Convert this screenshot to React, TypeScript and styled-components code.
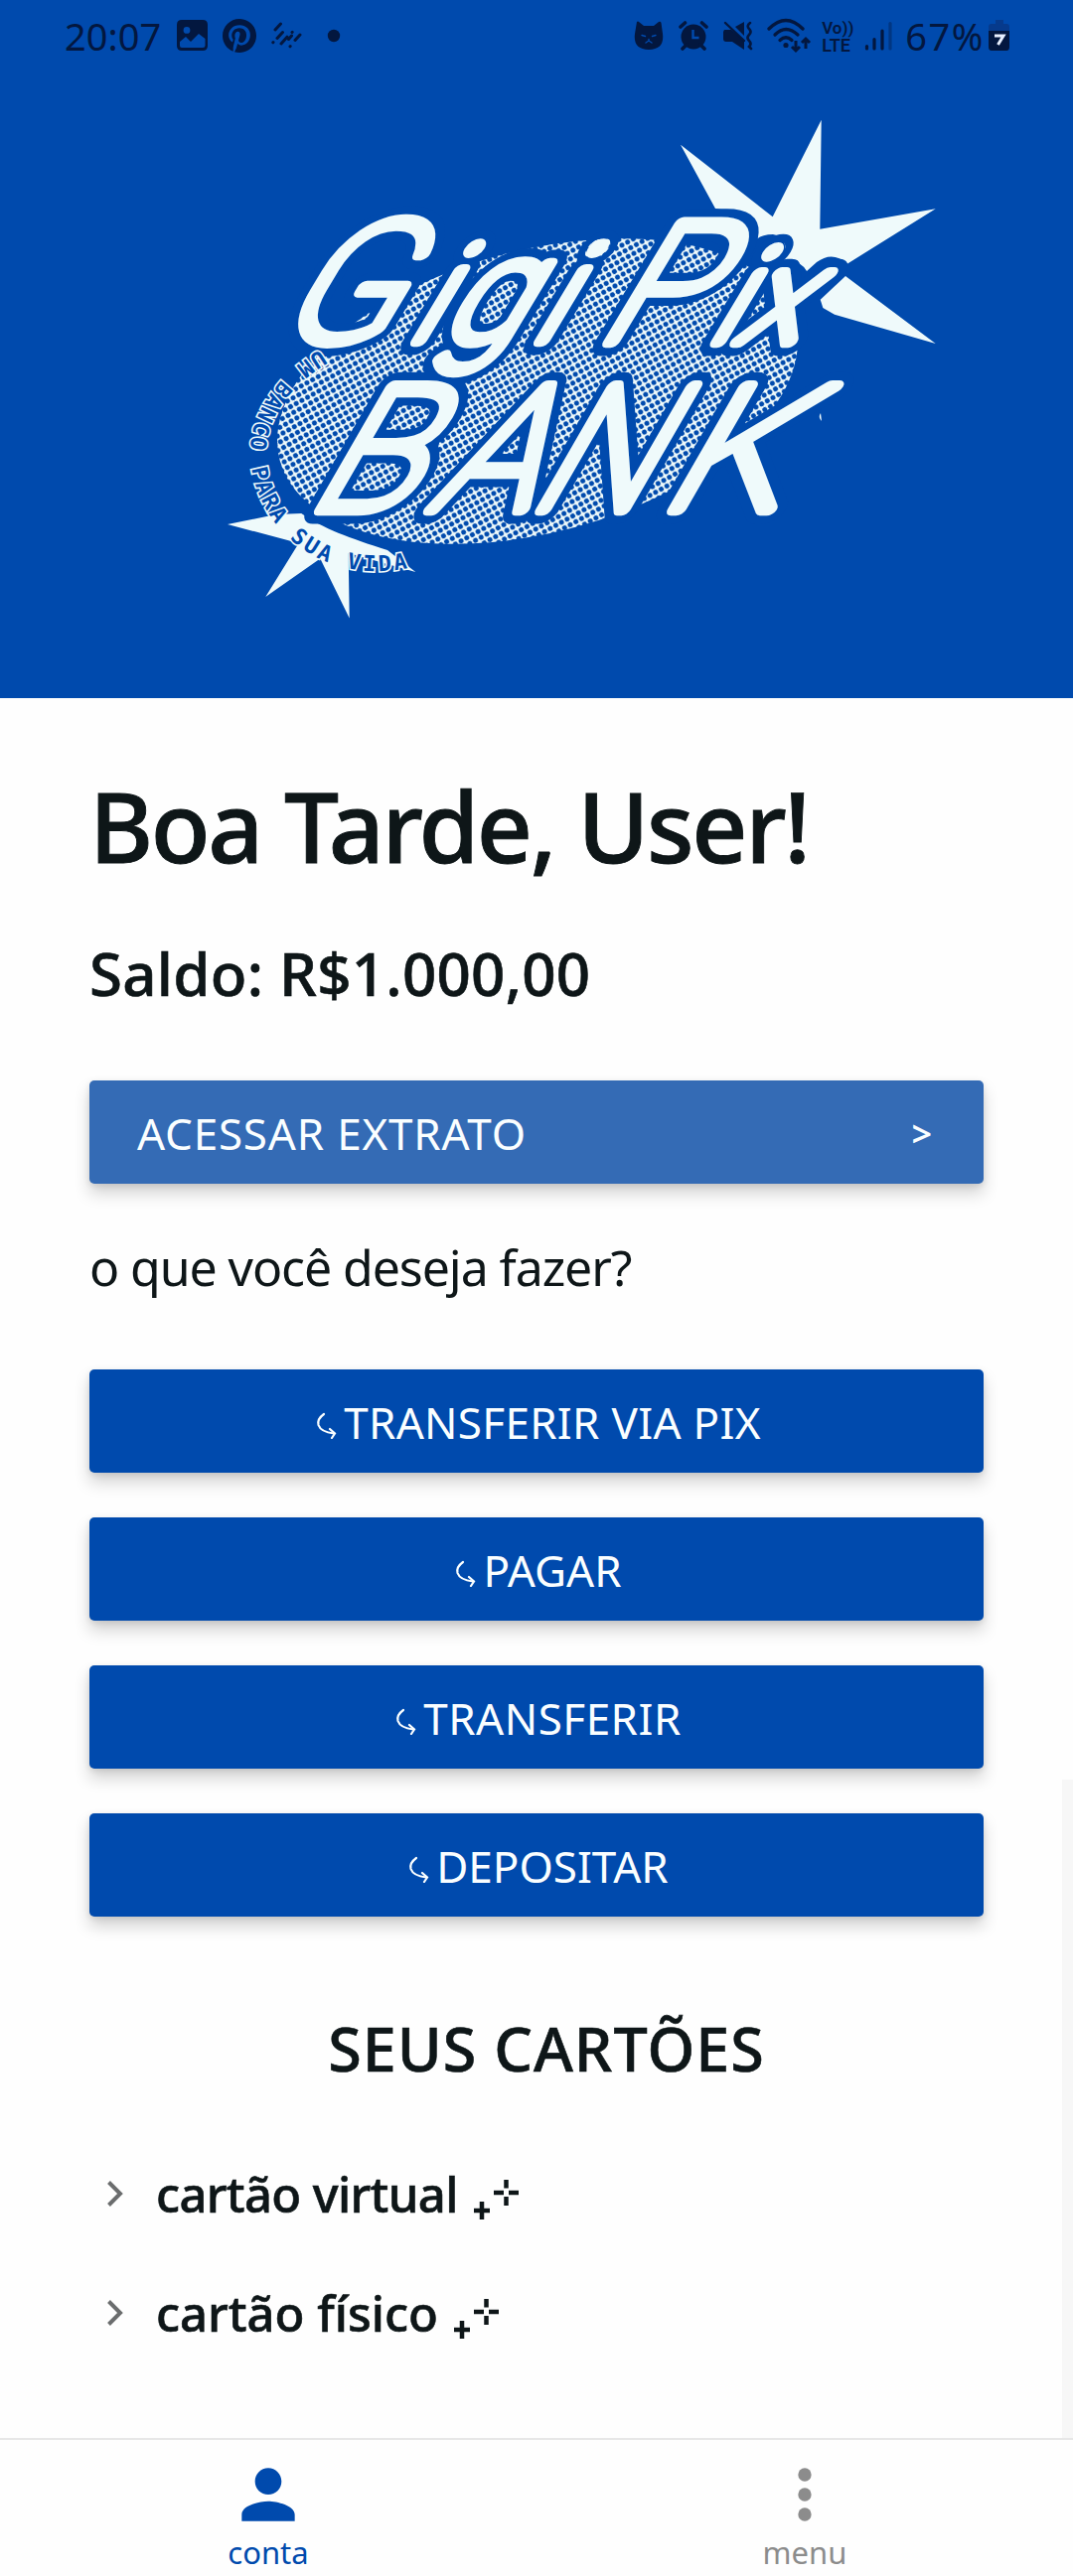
import React from "react";
import styled, { createGlobalStyle } from "styled-components";

const BLUE = "#004aad";
const PALE = "#effafb";
const INK = "#0e1618";
const STATUS = "#03173f";

const GlobalStyle = createGlobalStyle`
  *, *::before, *::after { box-sizing: border-box; }
  body { margin: 0; background: #fff; }
`;

const Screen = styled.div`
  display: flex;
  flex-direction: column;
  width: 1080px;
  height: 2594px;
  overflow: hidden;
  background: #fefefe;
  color: ${INK};
  font-family: "Noto Sans", "Open Sans", sans-serif;
`;

const Header = styled.header`
  flex: none;
  height: 703px;
  background: ${BLUE};
`;

const StatusBar = styled.div`
  display: flex;
  align-items: center;
  justify-content: space-between;
  height: 72px;
  padding: 0 63px 0 65px;
  color: ${STATUS};
`;

const StatusGroup = styled.div`
  display: flex;
  align-items: center;
`;

const StatusText = styled.span<{ $spacing?: number; $gap?: number }>`
  margin-left: ${(p) => p.$gap ?? 0}px;
  font-size: 38px;
  line-height: 70px;
  letter-spacing: ${(p) => p.$spacing ?? 0}px;
`;

const StatusIcon = styled.svg<{ $gap: number }>`
  display: block;
  flex: none;
  margin-left: ${(p) => p.$gap}px;
`;

const VoLte = styled.div`
  display: flex;
  flex-direction: column;
  width: 33px;
  margin-left: 9px;
  padding-top: 2px;
  font-weight: 600;
  line-height: 18px;
  white-space: nowrap;
`;

const VoLteLine = styled.span<{ $size: number }>`
  height: 18px;
  font-size: ${(p) => p.$size}px;
  font-family: Roboto, sans-serif;
`;

const Logo = styled.svg`
  display: block;
`;

const Main = styled.main`
  flex: none;
  display: flex;
  height: 1752px;
`;

const Content = styled.div`
  flex: 1;
  display: flex;
  flex-direction: column;
  padding: 73px 79px 0 90px;
`;

const ScrollTrack = styled.div`
  align-self: flex-end;
  width: 11px;
  height: 663px;
  background: #f7f7f7;
`;

const Greeting = styled.h1`
  margin: 0;
  height: 110px;
  font-size: 98px;
  font-weight: 500;
  line-height: 110px;
  letter-spacing: -2.4px;
  -webkit-text-stroke: 0.9px ${INK};
  white-space: nowrap;
`;

const Balance = styled.h2`
  margin: 59px 0 0;
  height: 70px;
  font-size: 60px;
  font-weight: 500;
  line-height: 70px;
  letter-spacing: 0.25px;
  -webkit-text-stroke: 0.6px ${INK};
  white-space: nowrap;
`;

const Button = styled.button<{ $soft?: boolean }>`
  display: flex;
  align-items: center;
  justify-content: ${(p) => (p.$soft ? "space-between" : "center")};
  width: 900px;
  height: 104px;
  padding: ${(p) => (p.$soft ? "1px 52px 0 48px" : "2px 0 0")};
  border: 0;
  border-radius: 5px;
  background: ${(p) => (p.$soft ? "#346bb5" : BLUE)};
  color: #fafeff;
  font-family: inherit;
  font-size: 44px;
  line-height: 60px;
  box-shadow: 0 10px 16px rgba(0, 0, 0, 0.17), 0 2px 6px rgba(0, 0, 0, 0.1);
`;

const StatementButton = styled(Button)`
  margin-top: 73px;
`;

const Label = styled.span<{ $spacing?: number }>`
  letter-spacing: ${(p) => p.$spacing ?? 0}px;
  white-space: nowrap;
`;

const Chevron = styled.span`
  padding-top: 2px;
  font-size: 36px;
  font-weight: 600;
`;

const Question = styled.p`
  margin: 49px 0 0;
  height: 70px;
  font-size: 50px;
  line-height: 70px;
  letter-spacing: -1.08px;
  white-space: nowrap;
`;

const Actions = styled.div`
  display: grid;
  gap: 45px;
  margin-top: 68px;
`;

const CardsTitle = styled.h2`
  margin: 98px 0 0;
  padding-left: 20px;
  width: 900px;
  height: 70px;
  font-size: 61px;
  font-weight: 500;
  line-height: 70px;
  letter-spacing: 1px;
  -webkit-text-stroke: 0.6px ${INK};
  text-align: center;
`;

const CardList = styled.ul`
  margin: 51px 0 0;
  padding: 0;
  list-style: none;
`;

const CardRow = styled.li`
  display: flex;
  align-items: center;
  height: 120px;
  padding-left: 18px;
`;

const CardName = styled.span<{ $spacing: number }>`
  margin-left: 33px;
  font-size: 49px;
  font-weight: 500;
  line-height: 60px;
  letter-spacing: ${(p) => p.$spacing}px;
  -webkit-text-stroke: 0.6px ${INK};
  white-space: nowrap;
`;

const Sparkle = styled.svg`
  margin: 12px 0 0 15px;
`;

const BottomNav = styled.nav`
  flex: 1;
  display: grid;
  grid-template-columns: 1fr 1fr;
  border-top: 2px solid #e7e7e7;
`;

const NavItem = styled.div<{ $active?: boolean }>`
  display: flex;
  flex-direction: column;
  align-items: center;
  padding-top: 15px;
  color: ${(p) => (p.$active ? BLUE : "#8c8c8c")};
`;

const NavLabel = styled.span`
  margin-top: -4px;
  font-size: 31px;
  line-height: 44px;
`;

function StatusIcons() {
  return (
    <StatusBar>
      <StatusGroup>
        <StatusText>20:07</StatusText>
        <StatusIcon $gap={16} width="32" height="32" viewBox="0 0 32 32">
          <path fill={STATUS} fillRule="evenodd" d="M6 0H26Q31 0 31 5V26Q31 31 26 31H5Q0 31 0 26V5Q0 0 5 0ZM10 7A3.400 3.400 0 1 0 10 13.800A3.400 3.400 0 0 0 10 7ZM3 22V26Q3 28 5 28H26Q28.500 28 28.500 26V19L22 14L14 22L9 17Z" />
        </StatusIcon>
        <StatusIcon $gap={14} width="34" height="34" viewBox="0 0 24 24">
          <path fill={STATUS} d="M12 0C5.373 0 0 5.373 0 12c0 5.084 3.163 9.426 7.627 11.174-.105-.949-.2-2.405.042-3.441.218-.937 1.407-5.965 1.407-5.965s-.359-.719-.359-1.782c0-1.668.967-2.914 2.171-2.914 1.023 0 1.518.769 1.518 1.690 0 1.029-.655 2.568-.994 3.995-.283 1.194.599 2.169 1.777 2.169 2.133 0 3.772-2.249 3.772-5.495 0-2.873-2.064-4.882-5.012-4.882-3.414 0-5.418 2.561-5.418 5.207 0 1.031.397 2.138.893 2.738.098.119.112.224.083.345l-.333 1.360c-.053.220-.174.267-.402.161-1.499-.698-2.436-2.889-2.436-4.649 0-3.785 2.750-7.262 7.929-7.262 4.163 0 7.398 2.967 7.398 6.931 0 4.136-2.607 7.464-6.227 7.464-1.216 0-2.359-.631-2.750-1.378l-.748 2.853c-.271 1.043-1.002 2.350-1.492 3.146C9.570 23.812 10.763 24 12 24c6.627 0 12-5.373 12-12S18.627 0 12 0z" />
        </StatusIcon>
        <StatusIcon $gap={15} width="32" height="28" viewBox="0 0 32 28">
          <path
            d="M4 8L9.500 2M1.800 20.700L2 20.500M6 16.500L11.500 10.500M10 22L16 15.200M19 24.700L19.200 24.500M21 10.500L21.200 10.300M17.500 17.500L20.500 14M24 18.500L29 13"
            fill="none"
            stroke={STATUS}
            strokeWidth="3"
            strokeLinecap="round"
          />
        </StatusIcon>
        <StatusIcon $gap={24} width="14" height="14" viewBox="0 0 14 14">
          <circle cx="7" cy="7" r="6.200" fill={STATUS} />
        </StatusIcon>
      </StatusGroup>
      <StatusGroup>
        <StatusIcon $gap={0} width="30" height="30" viewBox="0 0 30 30">
          <path fill={STATUS} d="M3 1Q4 0 5 1L10 5H20L25 1Q27 0 27.500 2L29 13Q31 29 15 29Q-1 29 1 13Z" />
          <g fill="none" stroke={BLUE} strokeWidth="1.400" strokeLinecap="round">
            <path d="M8 14.500L11.500 15.500M22 14.500L18.500 15.500M15 18.500V20L12 22M15 20L18 22" />
          </g>
        </StatusIcon>
        <StatusIcon $gap={15} width="30" height="30" viewBox="0 0 30 30">
          <circle cx="15" cy="16" r="12.500" fill={STATUS} />
          <path d="M2 6L6.500 2M28 6L23.500 2M4 28L8 24M26 28L22 24" stroke={STATUS} strokeWidth="3.600" strokeLinecap="round" />
          <path d="M14.500 9V17H20.500" fill="none" stroke={BLUE} strokeWidth="2.400" />
        </StatusIcon>
        <StatusIcon $gap={15} width="30" height="30" viewBox="0 0 30 30">
          <path d="M1 9H8L21 20V29L9 21H3Q0 21 0 18V11Z" fill={STATUS} />
          <path d="M12 6L21 1V15Z" fill={STATUS} />
          <path d="M2 2L21 20" stroke={STATUS} strokeWidth="2.400" strokeLinecap="round" />
          <path d="M27 2Q23 5 26 8Q29 11 26 14Q23 17 26 20Q29 23 26 26L28 28" fill="none" stroke={STATUS} strokeWidth="2.600" strokeLinecap="round" />
        </StatusIcon>
        <StatusIcon $gap={14} width="46" height="36" viewBox="0 0 46 36">
          <g fill="none" stroke={STATUS} strokeLinecap="round">
            <path d="M2 11Q19 -6 36 11" strokeWidth="3.300" />
            <path d="M8 17Q19 6 31 17" strokeWidth="3.300" />
            <path d="M13 22.500Q19 17 25 22.500" strokeWidth="3.300" />
            <path d="M29 23V32M25 29L29 33L33 29M39 31V22M35 25L39 21L43 25" strokeWidth="3" strokeLinecap="butt" />
          </g>
          <circle cx="19" cy="27.500" r="2.600" fill={STATUS} />
        </StatusIcon>
        <VoLte>
          <VoLteLine $size={17}>Vo))</VoLteLine>
          <VoLteLine $size={18}>LTE</VoLteLine>
        </VoLte>
        <StatusIcon $gap={10} width="29" height="30" viewBox="0 0 29 30">
          <g strokeWidth="3.200" strokeLinecap="round" stroke={STATUS}>
            <path d="M2.500 25.500V28M10 18.500V28M18 10V28" />
            <path d="M26 2.500V28" opacity="0.380" />
          </g>
        </StatusIcon>
        <StatusText $spacing={1.6} $gap={12}>
          67%
        </StatusText>
        <StatusIcon $gap={4} width="22" height="32" viewBox="0 0 22 32">
          <path d="M7 0H15V4H18Q21 4 21 7V12H0V7Q0 4 3 4H7Z" fill="#063a8c" />
          <path d="M0 11H21V27Q21 31 18 31H3Q0 31 0 27Z" fill={STATUS} />
          <path d="M6 16H15L9.500 25" fill="none" stroke="#e8f0ff" strokeWidth="3" />
        </StatusIcon>
      </StatusGroup>
    </StatusBar>
  );
}

function BankLogo() {
  return (
    <Logo width="1080" height="631" viewBox="0 72 1080 631">
      <defs>
        <pattern id="halftone" width="6.500" height="6.500" patternUnits="userSpaceOnUse" patternTransform="rotate(-14)">
          <rect width="6.500" height="6.500" fill={PALE} />
          <circle cx="3.250" cy="3.250" r="2.500" fill={BLUE} />
        </pattern>
        <path id="tagline" d="M322 352C268 384 244 432 254 476C267 540 332 594 424 569" />
      </defs>
      <ellipse cx="541" cy="394" rx="268.500" ry="142" transform="rotate(-15 541 394)" fill="url(#halftone)" />
      <g fill={PALE}>
        <path d="M685 145.700L777.700 218.300L826.700 120.700L825.300 230.700L941.700 210.300L852.700 265.700Q838 252 822 264L812 273Q804 260 788 264Q796 240 778 236Q760 236 757 249Q756 214 720 210Z" />
        <path d="M851 278L941.700 346L840 316.700L828.300 310L825.700 301.700Z" />
        <path d="M229 528L278 518L303.300 517C325 532 352 542 390 554L418.300 576L350.700 557L351.700 622.500L322.300 562.500L267.300 601L300.700 547Z" />
      </g>
      <use href="#lettering" stroke={BLUE} strokeWidth="29" />
      <path d="M826 416Q823 420 827 424Z" fill={PALE} />
      <g stroke={PALE} strokeWidth="12.500">
        <g id="lettering" fill={PALE} strokeLinejoin="round" strokeLinecap="round" fontFamily="Roboto, sans-serif" fontWeight="100">
          <text transform="translate(0 343) skewX(-31)" fontSize="134">
            <tspan x="274" fontSize="168">G</tspan>
            <tspan x="408">i</tspan>
            <tspan x="440" fontSize="146">g</tspan>
            <tspan x="532">i</tspan>
          </text>
          <text transform="translate(0 344) skewX(-31)" fontSize="130">
            <tspan x="597" fontSize="168">P</tspan>
            <tspan x="710">i</tspan>
            <tspan x="738">x</tspan>
          </text>
          <text transform="translate(0 513) skewX(-30)" fontSize="174">
            <tspan x="306">B</tspan>
            <tspan x="430" textLength="100" lengthAdjust="spacingAndGlyphs">A</tspan>
            <tspan x="529" textLength="116" lengthAdjust="spacingAndGlyphs">N</tspan>
            <tspan x="660" textLength="122" lengthAdjust="spacingAndGlyphs">K</tspan>
          </text>
        </g>
      </g>
      <text
        fill={BLUE}
        stroke={PALE}
        strokeWidth="3.200"
        paintOrder="stroke"
        fontFamily="'DejaVu Sans Mono', monospace"
        fontWeight="700"
        fontSize="22"
      >
        <textPath href="#tagline" textLength="356">UM BANCO PARA SUA VIDA</textPath>
      </text>
    </Logo>
  );
}

function ActionButton({ label, spacing }: { label: string; spacing?: number }) {
  return (
    <Button>
      <svg width="32" height="34" viewBox="0 0 32 34">
        <g fill="none" stroke="#fafeff" strokeWidth="2.200" strokeLinecap="round">
          <path d="M12 9Q5 14 6.500 20Q9 27 22 28.500" />
          <path d="M18 24L23 28.500L20 33" />
        </g>
      </svg>
      <Label $spacing={spacing}>{label}</Label>
    </Button>
  );
}

function Card({ name, spacing }: { name: string; spacing: number }) {
  return (
    <CardRow>
      <svg width="16" height="26" viewBox="0 0 16 26">
        <path d="M1.500 1.500L13 13L1.500 24.500" fill="none" stroke="#6b6d6e" strokeWidth="4" />
      </svg>
      <CardName $spacing={spacing}>{name}</CardName>
      <Sparkle width="48" height="42" viewBox="0 0 48 42">
        <path d="M1 32H17M9 23V41M21 14H31M36 14H46M33.500 1V9.500M33.500 18V27" fill="none" stroke={INK} strokeWidth="4.500" />
      </Sparkle>
    </CardRow>
  );
}

export default function App() {
  return (
    <Screen>
      <GlobalStyle />
      <Header>
        <StatusIcons />
        <BankLogo />
      </Header>
      <Main>
        <Content>
          <Greeting>Boa Tarde, User!</Greeting>
          <Balance>Saldo: R$1.000,00</Balance>
          <StatementButton $soft>
            <Label $spacing={0.8}>ACESSAR EXTRATO</Label>
            <Chevron>&gt;</Chevron>
          </StatementButton>
          <Question>o que você deseja fazer?</Question>
          <Actions>
            <ActionButton label="TRANSFERIR VIA PIX" spacing={0.3} />
            <ActionButton label="PAGAR" />
            <ActionButton label="TRANSFERIR" spacing={0.5} />
            <ActionButton label="DEPOSITAR" />
          </Actions>
          <CardsTitle>SEUS CARTÕES</CardsTitle>
          <CardList>
            <Card name="cartão virtual" spacing={-0.65} />
            <Card name="cartão físico" spacing={0} />
          </CardList>
        </Content>
        <ScrollTrack />
      </Main>
      <BottomNav>
        <NavItem $active>
          <svg width="80" height="80" viewBox="0 0 24 24" fill="currentColor">
            <path d="M12 12c2.210 0 4-1.790 4-4s-1.790-4-4-4-4 1.790-4 4 1.790 4 4 4zm0 2c-2.670 0-8 1.340-8 4v2h16v-2c0-2.660-5.330-4-8-4z" />
          </svg>
          <NavLabel>conta</NavLabel>
        </NavItem>
        <NavItem>
          <svg width="80" height="80" viewBox="0 0 24 24" fill="currentColor">
            <circle cx="12" cy="6" r="2" />
            <circle cx="12" cy="12" r="2" />
            <circle cx="12" cy="18" r="2" />
          </svg>
          <NavLabel>menu</NavLabel>
        </NavItem>
      </BottomNav>
    </Screen>
  );
}
